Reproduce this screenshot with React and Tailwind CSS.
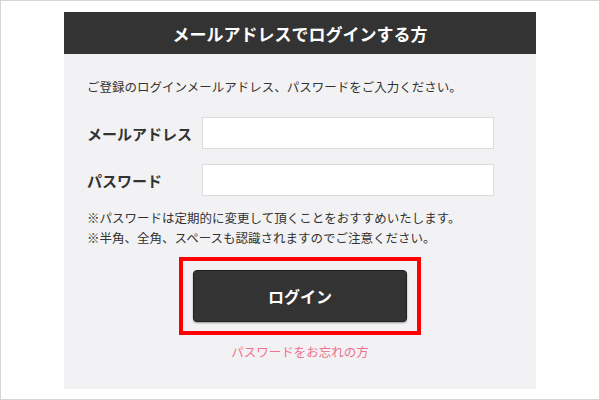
import React from 'react';

const font = { fontFamily: '"Noto Sans CJK JP", "Noto Sans", sans-serif' };

const App = () => {
    return (
        <div className="w-[600px] h-[400px] bg-white border border-[#d6d6d6] overflow-hidden" style={font}>
            <div className="w-[472px] mx-auto mt-[11px] flex flex-col">
                <div className="h-[42px] bg-[#333333] flex items-center justify-center">
                    <h2 className="text-[17px] font-bold text-white leading-none">メールアドレスでログインする方</h2>
                </div>
                <div className="h-[335px] bg-[#f2f2f4] px-[23px] pt-[24px] flex flex-col">
                    <p className="text-[12.5px] leading-[18px] text-[#333]">ご登録のログインメールアドレス、パスワードをご入力ください。</p>

                    <div className="flex items-center mt-[21px]">
                        <label className="w-[115px] text-[15px] font-bold text-[#333] leading-none">メールアドレス</label>
                        <input type="email" className="w-[292px] h-[32px] bg-white border border-[#dcdcdc] outline-none" />
                    </div>
                    <div className="flex items-center mt-[15px]">
                        <label className="w-[115px] text-[15px] font-bold text-[#333] leading-none">パスワード</label>
                        <input type="password" className="w-[292px] h-[32px] bg-white border border-[#dcdcdc] outline-none" />
                    </div>

                    <div className="mt-[12px] text-[12.5px] leading-[20px] text-[#333]">
                        <p>※パスワードは定期的に変更して頂くことをおすすめいたします。</p>
                        <p>※半角、全角、スペースも認識されますのでご注意ください。</p>
                    </div>

                    <div className="self-center mt-[9px] border-4 border-[#ff0000] px-[10px] py-[9px]">
                        <button className="w-[214px] h-[52px] bg-[#333333] border border-[#222] rounded-[4px] shadow-[0_1px_2px_rgba(0,0,0,0.4)] text-white text-[16px] font-bold">
                            ログイン
                        </button>
                    </div>

                    <a href="#" className="self-center mt-[8px] text-[12.5px] leading-[18px] text-[#f0708f]">パスワードをお忘れの方</a>
                </div>
            </div>
        </div>
    );
};
export default App;
